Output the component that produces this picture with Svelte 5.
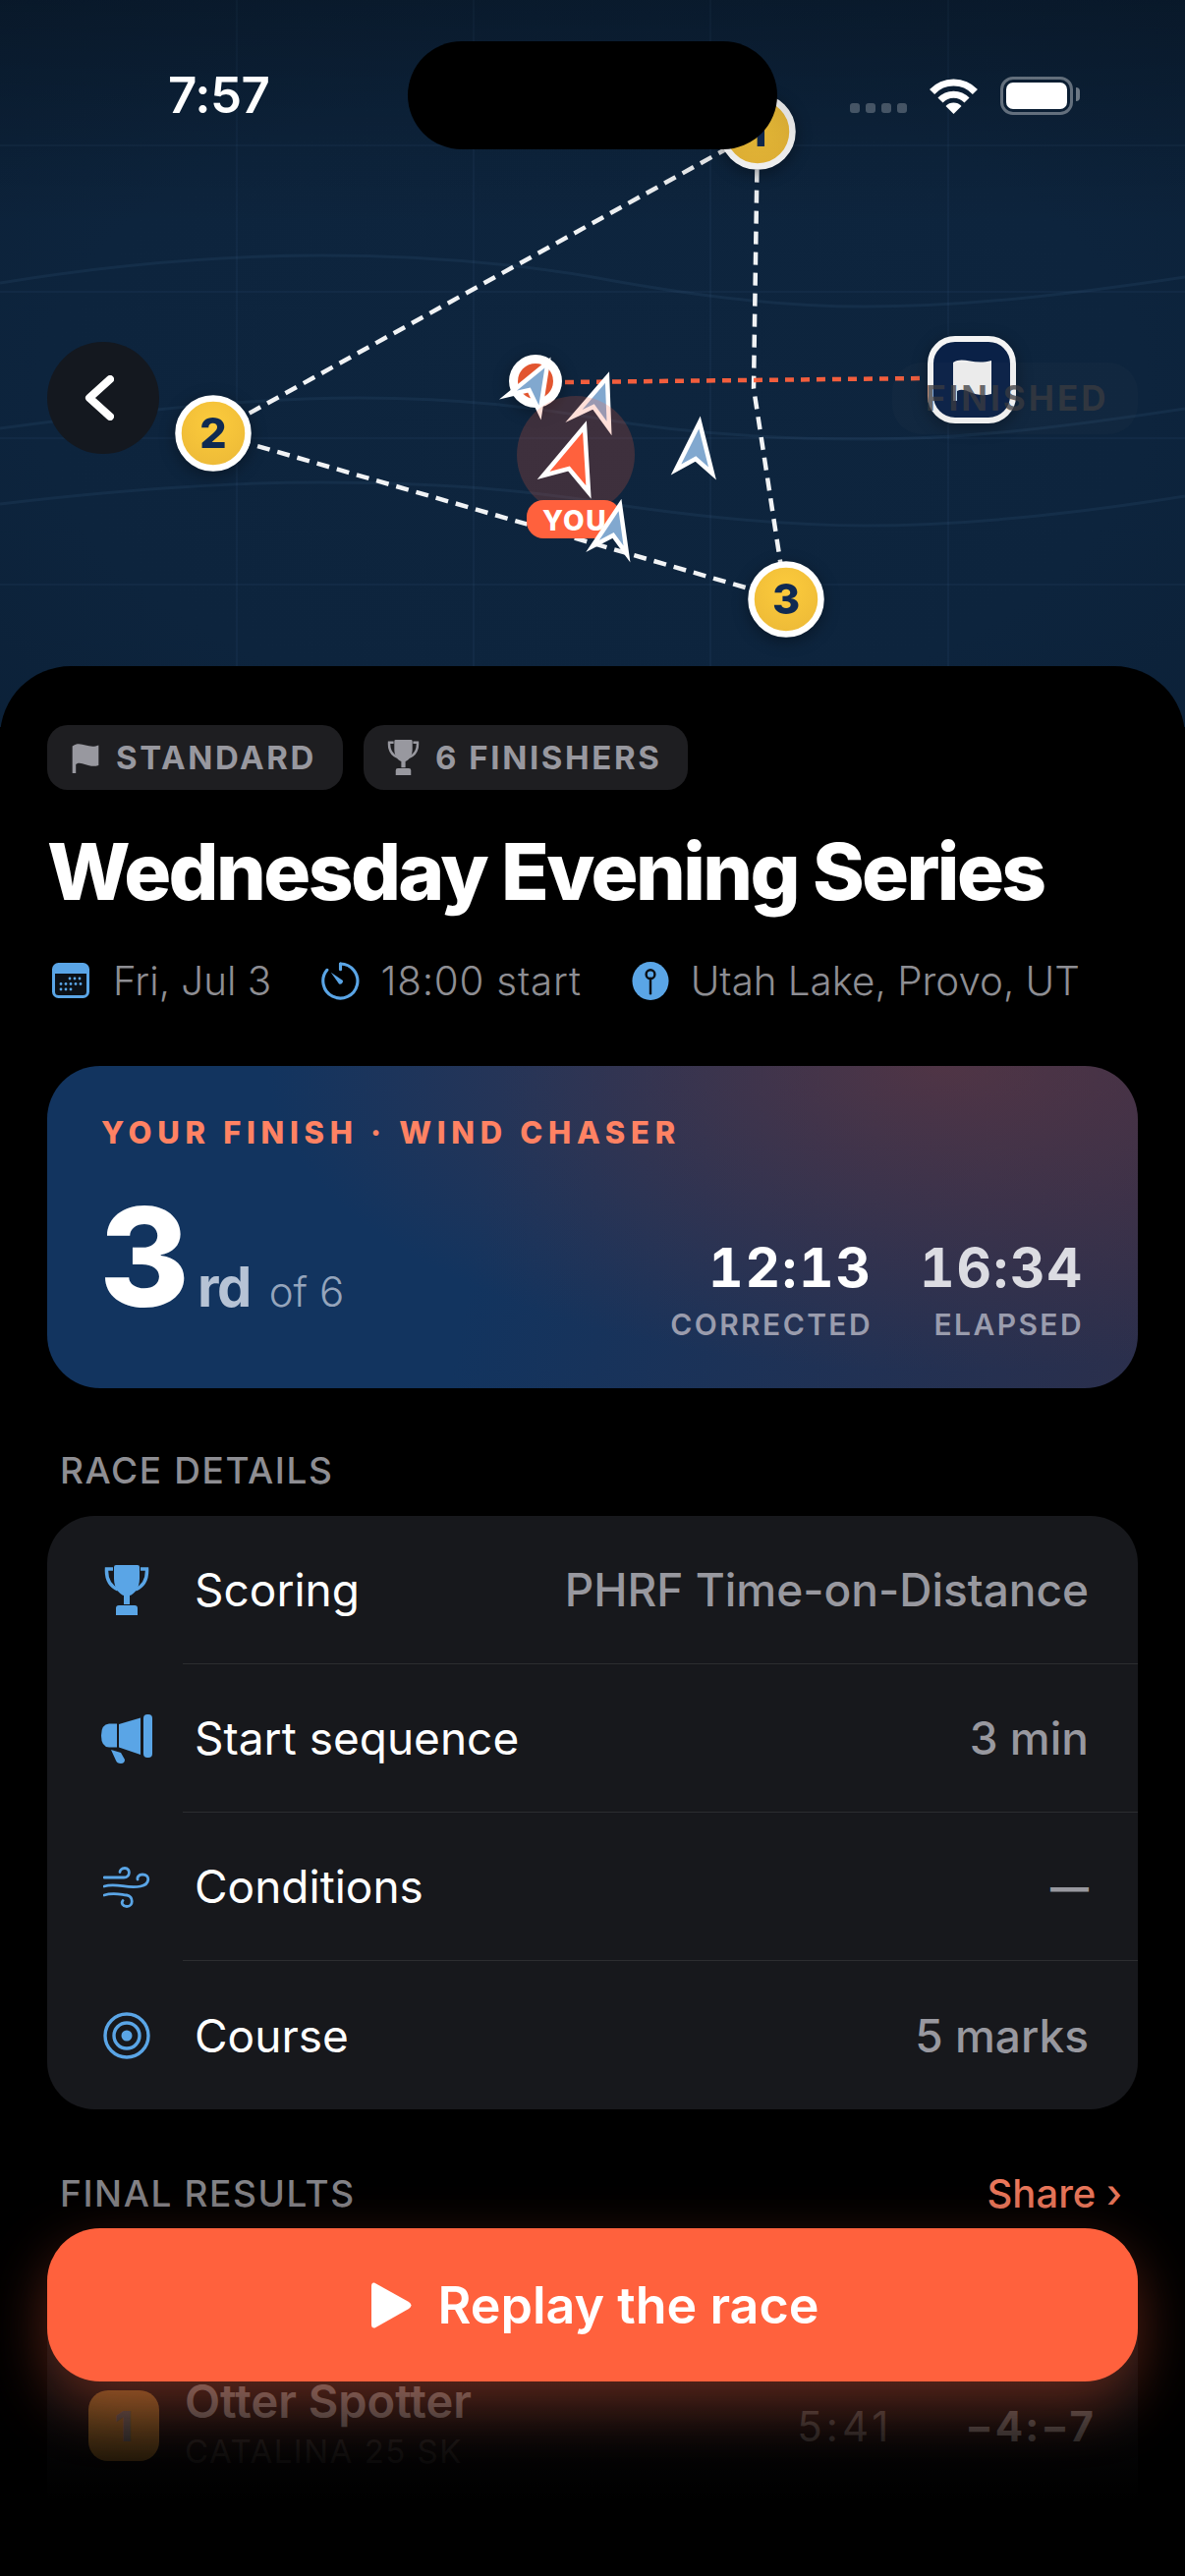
<script>
  const rows = [
    { icon: 'trophy', label: 'Scoring', value: 'PHRF Time-on-Distance' },
    { icon: 'mega', label: 'Start sequence', value: '3 min' },
    { icon: 'wind', label: 'Conditions', value: '—', dash: true },
    { icon: 'target', label: 'Course', value: '5 marks' }
  ];
  const gridX = [241, 482, 723, 965];
  const gridY = [148, 297, 446, 595];
  const marks = [
    { n: 1, x: 771, y: 134 },
    { n: 2, x: 217, y: 441 },
    { n: 3, x: 800, y: 610 }
  ];
  const contours = [
    'M0 288C110 270 220 260 327 260C430 260 520 268 603 282C700 300 790 312 880 312C990 312 1100 298 1206 282',
    'M0 436C120 420 250 405 365 405C450 405 530 412 603 425C700 442 790 447 880 447C990 447 1100 432 1206 416',
    'M0 513C110 500 220 491 327 491C430 491 520 497 603 510C700 525 790 535 880 535C990 535 1100 522 1206 505'
  ];
</script>

{#snippet trophy(cls)}
  <svg class={cls} viewBox="0 0 46 51">
    <path d="M9 4H2.500C2 14 5 21 14 25M37 4h6.500C44 14 41 21 32 25" fill="none" stroke="currentColor" stroke-width="3.500"/>
    <path d="M10 2Q10 0 12 0H34Q36 0 36 2V14C36 24 30 30 26 31V40H20V31C16 30 10 24 10 14Z" fill="currentColor"/>
    <path d="M12 44Q12 41 15 41H31Q34 41 34 44V51H12Z" fill="currentColor"/>
  </svg>
{/snippet}

<div class="page">
  <section class="map">
    <svg class="canvas" viewBox="0 0 1206 740" width="1206" height="740">
      <defs>
        <linearGradient id="topShade" x1="0" y1="0" x2="0" y2="1">
          <stop offset="0" stop-color="#000" stop-opacity=".24"/>
          <stop offset="1" stop-color="#000" stop-opacity="0"/>
        </linearGradient>
        <radialGradient id="yellow" cx=".5" cy=".35" r=".7">
          <stop offset="0" stop-color="#fccb3c"/>
          <stop offset="1" stop-color="#ecb937"/>
        </radialGradient>
      </defs>
      {#each gridX as x}<line x1={x} y1="0" x2={x} y2="740" class="grid"/>{/each}
      {#each gridY as y}<line x1="0" y1={y} x2="1206" y2={y} class="grid"/>{/each}
      {#each contours as d}<path {d} class="contour"/>{/each}

      <path d="M217 441L771 134L767 395L800 610L217 441" class="course"/>
      <path d="M575 389L941 385" class="line-red"/>

      <circle cx="545" cy="388" r="27" fill="#fff" class="lift"/>
      <circle cx="545" cy="388" r="18" fill="#e2552f"/>

      <path d="M557.500 369L517 402L538.500 397L549.500 420Z" class="boat blue"/>
      <path d="M618 384L584 423.500L604 414L620 436Z" class="boat blue"/>
      <path d="M712 430L688 478L708 467L725 482Z" class="boat blue"/>

      <circle cx="586" cy="463" r="60" class="halo"/>
      <path d="M595 434L553 484L579 477L599 501Z" class="boat you"/>

      <rect x="536" y="509" width="96" height="39" rx="17" fill="#ff613d"/>
      <text x="585" y="540" class="you-label">YOU</text>
      <path d="M631 514L603 556L624 545L638 564Z" class="boat blue"/>

      {#each marks as m}
        <g class="lift">
          <circle cx={m.x} cy={m.y} r="35.500" fill="url(#yellow)" stroke="#fff" stroke-width="6.500"/>
          <text x={m.x} y={m.y + 15} class="mark-num">{m.n}</text>
        </g>
      {/each}

      <g class="lift">
        <rect x="947" y="345" width="84" height="83" rx="25" fill="#0a2147" stroke="#f4f4f4" stroke-width="6"/>
      </g>
      <path d="M970 369C980 362 990 372 1009 367V401C990 406 984 393 974 398V408H970Z" fill="#f0f0f0"/>

      <rect x="908" y="369" width="250" height="73" rx="30" fill="#8a8a8a" fill-opacity=".04"/>
      <text x="942" y="418" class="finished">FINISHED</text>

      <rect x="0" y="0" width="1206" height="230" fill="url(#topShade)"/>
    </svg>

    <button class="back" aria-label="Back">
      <svg viewBox="0 0 30 46" width="30" height="46"><path d="M26 4L5 23L26 42" fill="none" stroke="#fff" stroke-width="8" stroke-linecap="round" stroke-linejoin="round"/></svg>
    </button>

    <div class="status">
      <span class="time">7:57</span>
      <span class="island"></span>
      <span class="indicators">
        <span class="dots"><i></i><i></i><i></i><i></i></span>
        <svg class="wifi" viewBox="0 0 51 37" width="51" height="37">
          <path d="M3.600 14.500A30 30 0 0 1 47.400 14.500M12 23A18.500 18.500 0 0 1 39 23" fill="none" stroke="#fff" stroke-width="7"/>
          <path d="M25.500 37L17.500 29A11 11 0 0 1 33.500 29Z" fill="#fff"/>
        </svg>
        <span class="battery"><b></b></span>
      </span>
    </div>
  </section>

  <section class="sheet">
    <div class="chips">
      <span class="chip">
        <svg class="chip-icon" viewBox="0 0 30 36"><path d="M0 5C10 -2 18 9 30 4V27C18 31 10 21 4 26V36H0Z" fill="currentColor"/></svg>
        STANDARD
      </span>
      <span class="chip">
        {@render trophy('chip-icon trophy')}
        6 FINISHERS
      </span>
    </div>

    <h1>Wednesday Evening Series</h1>

    <div class="meta">
      <span class="meta-item">
        <svg class="m-cal" viewBox="0 0 38 36">
          <rect x="1.500" y="1.500" width="35" height="33" rx="5" fill="#0b1016" stroke="#5aa5e6" stroke-width="3"/>
          <path d="M1.500 11V6.500Q1.500 1.500 6.500 1.500H31.500Q36.500 1.500 36.500 6.500V11Z" fill="#5aa5e6"/>
          <g fill="#5aa5e6">
            <circle cx="18" cy="16" r="1.400"/><circle cx="23" cy="16" r="1.400"/><circle cx="28" cy="16" r="1.400"/>
            <circle cx="9" cy="21.500" r="1.400"/><circle cx="14" cy="21.500" r="1.400"/><circle cx="19" cy="21.500" r="1.400"/><circle cx="24" cy="21.500" r="1.400"/><circle cx="29" cy="21.500" r="1.400"/>
            <circle cx="9" cy="27" r="1.400"/><circle cx="14" cy="27" r="1.400"/><circle cx="19" cy="27" r="1.400"/>
          </g>
        </svg>
        Fri, Jul 3
      </span>
      <span class="meta-item">
        <svg class="m-timer" viewBox="0 0 40 40">
          <path d="M20 2A18 18 0 1 1 6 8.500" fill="none" stroke="#5aa5e6" stroke-width="3.200" stroke-linecap="round"/>
          <path d="M20 2V8" stroke="#5aa5e6" stroke-width="3.200" stroke-linecap="round"/>
          <path d="M10 11L22.500 19.500A3 3 0 0 1 18.500 23Z" fill="#5aa5e6"/>
        </svg>
        18:00 start
      </span>
      <span class="meta-item">
        <svg class="m-pin" viewBox="0 0 38 40">
          <ellipse cx="19" cy="20" rx="19" ry="20" fill="#5aa5e6"/>
          <circle cx="19" cy="13" r="4.500" fill="#5aa5e6" stroke="#0b0f14" stroke-width="2.500"/>
          <path d="M19 17.500V33" stroke="#0b0f14" stroke-width="2.500" stroke-linecap="round"/>
        </svg>
        Utah Lake, Provo, UT
      </span>
    </div>

    <div class="finish">
      <div class="finish-title">YOUR FINISH · WIND CHASER</div>
      <div class="finish-row">
        <div class="place"><span class="big">3</span><span class="ord">rd</span><span class="of">of 6</span></div>
        <div class="times">
          <div class="stat"><div class="num">12:13</div><div class="cap">CORRECTED</div></div>
          <div class="stat dim"><div class="num">16:34</div><div class="cap">ELAPSED</div></div>
        </div>
      </div>
    </div>

    <div class="section-label first">RACE DETAILS</div>
    <div class="list">
      {#each rows as r}
        <div class="row">
          <span class="row-icon">
            {#if r.icon === 'trophy'}
              {@render trophy('ic-trophy')}
            {:else if r.icon === 'mega'}
              <svg class="ic-mega" viewBox="0 0 52 50" fill="currentColor">
                <rect x="43" y="0" width="9" height="44" rx="4"/>
                <path d="M18 10L40 3.500V41L18 33.500Z"/>
                <path d="M16 9.500V33.500H8Q0 33 0 21.500T8 9.500Z"/>
                <path d="M10 36L20 39L24 46Q24 50 20 50Q16 50 15 47Z"/>
              </svg>
            {:else if r.icon === 'wind'}
              <svg class="ic-wind" viewBox="0 0 48 42" fill="none" stroke="currentColor" stroke-width="2.800" stroke-linecap="round">
                <path d="M1 11H21C28 11 28 1.500 22 1.500C18.500 1.500 17 4 17 5.500"/>
                <path d="M1 20C14 16 24 23 38 20C48 18 48 8 40 8C36 8 34.500 11 35 13"/>
                <path d="M1 29C10 26 16 28 24 29C31 30 31 40.500 24 40.500C20 40.500 18 37 20 34.500"/>
              </svg>
            {:else}
              <svg class="ic-target" viewBox="0 0 48 48" fill="none" stroke="currentColor" stroke-width="3.400">
                <circle cx="24" cy="24" r="22"/>
                <circle cx="24" cy="24" r="13"/>
                <circle cx="24" cy="24" r="5.500" fill="currentColor" stroke="none"/>
              </svg>
            {/if}
          </span>
          <span class="row-body">
            <span class="row-label">{r.label}</span>
            <span class="row-value" class:dash={r.dash}>{r.value}</span>
          </span>
        </div>
      {/each}
    </div>

    <div class="results-head">
      <div class="section-label">FINAL RESULTS</div>
      <div class="share">Share ›</div>
    </div>
    <div class="results">
      <div class="res-row">
        <span class="rank">1</span>
        <span class="res-name"><b>Otter Spotter</b><small>CATALINA 25 SK</small></span>
        <span class="res-time">5:41</span>
        <span class="res-delta">−4:−7</span>
      </div>
    </div>
  </section>

  <div class="fade"></div>
  <button class="replay">
    <svg viewBox="0 0 41 47" width="41" height="47"><path d="M3 0.500Q0 0 0 4V43Q0 47 3.500 46.500L38 27Q43 23.500 38 20Z" fill="#fff"/></svg>
    Replay the race
  </button>
</div>

<style>
  :global(body) { margin: 0; background: #000; }
  .page {
    position: relative; width: 1206px; height: 2622px; overflow: hidden; background: #000;
    font-family: Inter, "Noto Sans", sans-serif; color: #fff;
  }
  .map {
    position: relative; height: 740px;
    background: radial-gradient(ellipse 85% 80% at 50% 55%, #0e253e 0%, #0d243d 55%, #0b1f35 100%);
  }
  .canvas { position: absolute; inset: 0; display: block; }
  .grid { stroke: rgba(120,170,220,.08); stroke-width: 1.500; }
  .contour { fill: none; stroke: rgba(120,170,220,.08); stroke-width: 3; }
  .course { fill: none; stroke: #f1f3f5; stroke-width: 4.500; stroke-dasharray: 13 8; }
  .line-red { fill: none; stroke: #ff613d; stroke-width: 4.500; stroke-dasharray: 9 7; opacity: .95; }
  .boat { stroke: #fff; stroke-width: 4.500; stroke-linejoin: miter; stroke-miterlimit: 8; }
  .blue { fill: #81a8cf; }
  .you { fill: #ff613d; stroke-width: 4.500; }
  .halo { fill: #ff613d; fill-opacity: .2; }
  .lift { filter: drop-shadow(0 4px 8px rgba(0,0,0,.35)); }
  .you-label { font: 800 28px Inter, sans-serif; fill: #fff; text-anchor: middle; letter-spacing: 1.500px; }
  .mark-num { font: 800 43px Inter, sans-serif; fill: #0f2a52; text-anchor: middle; }
  .finished { font: 700 35px Inter, sans-serif; fill: #3b3b40; fill-opacity: .75; letter-spacing: 3px; }

  .back {
    position: absolute; left: 48px; top: 348px; width: 114px; height: 114px; border: 0; padding: 0; border-radius: 50%;
    background: #14181f; display: flex; align-items: center; justify-content: center;
  }
  .back svg { margin-left: -8px; }

  .status { position: absolute; left: 0; right: 0; top: 0; height: 160px; }
  .time { position: absolute; left: 171px; top: 66px; font-size: 51px; font-weight: 600; line-height: 62px; letter-spacing: -.5px; }
  .island { position: absolute; left: 415px; top: 42px; width: 376px; height: 110px; border-radius: 55px; background: #000; }
  .indicators { position: absolute; left: 865px; top: 78px; display: flex; align-items: flex-start; }
  .dots { display: flex; gap: 6px; margin-top: 27px; margin-right: 22px; }
  .dots i { width: 10px; height: 10px; border-radius: 3px; background: rgba(255,255,255,.24); }
  .wifi { margin-top: 1px; margin-right: 22px; }
  .battery {
    position: relative; box-sizing: border-box; width: 74px; height: 39px; border: 3.500px solid rgba(255,255,255,.36); border-radius: 13px; padding: 3px;
    display: block;
  }
  .battery b { display: block; height: 100%; background: #fff; border-radius: 7px; }
  .battery::after { content: ''; position: absolute; right: -10px; top: 8px; width: 4px; height: 14px; border-radius: 0 4px 4px 0; background: rgba(255,255,255,.4); }

  .sheet {
    position: relative; margin-top: -62px; padding: 60px 48px 0; background: #000; border-radius: 72px 72px 0 0;
  }
  .chips { display: flex; gap: 21px; }
  .chip {
    display: flex; align-items: center; gap: 16px; height: 66px; box-sizing: border-box; padding: 0 27px 0 24px; border-radius: 21px;
    background: #1e1e21; color: #98989f; font-size: 33px; font-weight: 700; letter-spacing: 2.600px;
  }
  .chip-icon { width: 30px; height: 32px; display: block; flex: none; }
  .chip-icon.trophy { width: 33px; height: 36px; }
  h1 { margin: 36px 0 0; font-size: 80px; line-height: 94px; font-weight: 800; letter-spacing: -2.600px; white-space: nowrap; }

  .meta { display: flex; align-items: center; margin: 39px 0 0 5px; font-size: 40.300px; font-weight: 300; color: #8e8e93; height: 50px; }
  .meta-item { display: flex; align-items: center; white-space: nowrap; }
  .meta-item:nth-child(2) { margin-left: 50.500px; letter-spacing: .8px; }
  .meta-item:nth-child(3) { margin-left: 51px; }
  .m-cal { width: 38px; height: 36px; margin-right: 24px; }
  .m-timer { width: 39px; height: 39px; margin-right: 22px; }
  .m-pin { width: 38px; height: 39px; margin-right: 22px; }

  .finish {
    margin-top: 62px; height: 328px; box-sizing: border-box; padding: 50px 55px 0 55px; border-radius: 54px;
    background:
      radial-gradient(ellipse 62% 95% at 82% 0%, rgba(110,55,60,.6) 0%, rgba(110,55,60,0) 100%),
      linear-gradient(100deg, #12345f 40%, #2b2f4c 100%);
  }
  .finish-title { font-size: 31px; font-weight: 800; letter-spacing: 5.700px; color: #ff8263; line-height: 36px; white-space: nowrap; }
  .finish-row { display: flex; justify-content: space-between; align-items: flex-start; margin-top: 43px; }
  .place { display: flex; align-items: baseline; height: 130px; }
  .big { font-size: 140px; font-weight: 800; line-height: 130px; letter-spacing: -1px; margin-left: -2px; }
  .ord { font-size: 56px; font-weight: 700; color: #b6c3d5; margin-left: 9px; letter-spacing: -1.500px; }
  .of { font-size: 42px; font-weight: 300; color: #95a5bc; margin-left: 19px; }
  .times { display: flex; gap: 48px; margin-top: 45px; }
  .stat { text-align: right; }
  .num { font-size: 55px; line-height: 62px; font-weight: 700; letter-spacing: 2px; font-variant-numeric: tabular-nums; }
  .cap { font-size: 30px; line-height: 36px; font-weight: 600; letter-spacing: 2.400px; color: #9a9cad; margin-top: 9px; }
  .stat.dim .num { color: #dcdce2; }

  .section-label { font-size: 37px; font-weight: 500; letter-spacing: 1.600px; color: #8e8e93; line-height: 44px; padding-left: 13px; }
  .section-label.first { margin-top: 62px; }
  .list { margin-top: 24px; border-radius: 48px; background: #17181c; overflow: hidden; }
  .row { display: flex; align-items: stretch; height: 151px; }
  .row-icon { width: 138px; flex: none; box-sizing: border-box; padding-left: 24px; display: flex; align-items: center; justify-content: center; color: #5aa5e6; }
  .row-body {
    flex: 1; display: flex; justify-content: space-between; align-items: center; padding-right: 50px; box-sizing: border-box;
    border-bottom: 1.500px solid #2c2d30;
  }
  .row:last-child .row-body { border-bottom: 0; }
  .row-label { font-size: 46px; margin-left: 12px; font-weight: 400; }
  .row-value { font-size: 46px; font-weight: 500; color: #98989f; }
  .row-value.dash { font-size: 39px; font-weight: 700; }
  .ic-trophy { width: 46px; height: 51px; }
  .ic-mega { width: 52px; height: 50px; }
  .ic-wind { width: 48px; height: 42px; }
  .ic-target { width: 48px; height: 48px; }

  .results-head { display: flex; justify-content: space-between; align-items: center; margin-top: 61px; }
  .share { font-size: 40px; font-weight: 500; color: #ff8263; padding-right: 16px; }
  .results { margin-top: 26px; height: 300px; border-radius: 48px; background: #17181c; padding: 136px 43px 0 42px; box-sizing: border-box; }
  .res-row { display: flex; align-items: center; }
  .rank { width: 72px; height: 72px; border-radius: 20px; background: #ffb347; color: #aaa; display: flex; align-items: center; justify-content: center; font-size: 42px; font-weight: 800; margin-right: 26px; }
  .res-name { flex: 1; display: flex; flex-direction: column; margin-top: -2px; }
  .res-name b { font-size: 47px; font-weight: 600; color: #ddd; line-height: 54px; }
  .res-name small { font-size: 33px; color: #555; letter-spacing: 1.500px; line-height: 48px; }
  .res-time { font-size: 42px; color: #999; letter-spacing: 4px; margin-right: 74px; }
  .res-delta { font-size: 42px; font-weight: 700; color: #ccc; letter-spacing: 2px; }

  .fade {
    position: absolute; left: 0; right: 0; top: 2190px; bottom: 0;
    background: linear-gradient(180deg, rgba(0,0,0,0) 0%, rgba(0,0,0,.65) 58%, #000 82%);
  }
  .replay {
    position: absolute; left: 48px; top: 2268px; width: 1110px; height: 156px; border: 0; border-radius: 54px; background: #ff613d;
    color: #fff; font: 600 52px Inter, sans-serif; display: flex; align-items: center; justify-content: center; gap: 27px;
    box-shadow: 0 24px 60px rgba(255,97,61,.35); padding: 0 0 0 5px; box-sizing: border-box;
  }
</style>
